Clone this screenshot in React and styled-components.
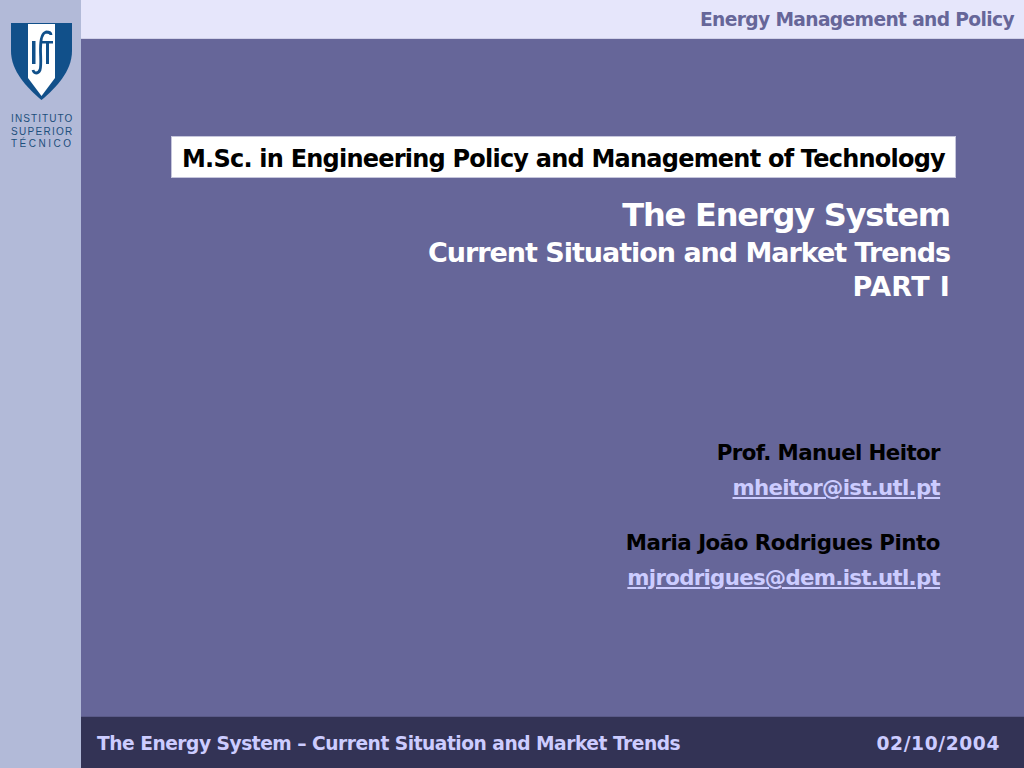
import styled, { createGlobalStyle } from "styled-components";

const Global = createGlobalStyle`
  html, body { margin: 0; padding: 0; }
  body { font-family: "DejaVu Sans", sans-serif; font-weight: bold; }
`;

const Slide = styled.div`
  width: 1024px;
  height: 768px;
  display: grid;
  grid-template-columns: 81px 1fr;
  overflow: hidden;
`;

const Sidebar = styled.aside`
  background: #b2bad8;
  display: flex;
  flex-direction: column;
  align-items: flex-start;
  padding-left: 11px;
`;

const Logo = styled.svg`
  display: block;
  width: 61px;
  height: 78px;
  margin-top: 23px;
`;

const LogoText = styled.div`
  margin-top: 12px;
  font-family: "Liberation Sans", sans-serif;
  font-weight: normal;
  font-size: 10px;
  line-height: 12.5px;
  color: #1d4f7c;
  white-space: nowrap;
`;

const LogoLine = styled.div`
  letter-spacing: ${(p) => p.$spacing}px;
`;

const Main = styled.div`
  display: flex;
  flex-direction: column;
  background: #666699;
`;

const Header = styled.header`
  height: 38px;
  flex: none;
  background: #e6e6fb;
  border-bottom: 1px solid #d0d0e8;
  color: #666699;
  font-size: 18.67px;
  letter-spacing: -0.64px;
  line-height: 39px;
  text-align: right;
  padding-right: 10px;
`;

const Content = styled.main`
  flex: 1;
  display: flex;
  flex-direction: column;
  align-items: flex-end;
  padding: 97px 68px 0 0;
`;

const Banner = styled.div`
  width: 785px;
  height: 42px;
  box-sizing: border-box;
  background: #fff;
  border: 1px solid #c6c6dc;
  color: #000;
  font-size: 24px;
  letter-spacing: -0.78px;
  line-height: 44px;
  text-align: center;
  white-space: nowrap;
`;

const Titles = styled.div`
  margin: 17px 6px 0 0;
  color: #fff;
  text-align: right;
`;

const Title = styled.h1`
  margin: 0;
  font-size: ${(p) => p.$size}px;
  line-height: ${(p) => p.$height}px;
  letter-spacing: ${(p) => p.$spacing}px;
`;

const Authors = styled.div`
  margin: 131px 16px 0 0;
  text-align: right;
  font-size: 21.33px;
`;

const Person = styled.div`
  margin-bottom: 20px;
`;

const Name = styled.div`
  color: #000;
  line-height: 35px;
  letter-spacing: ${(p) => p.$spacing}px;
`;

const Email = styled.a`
  display: block;
  color: #ccccff;
  line-height: 35px;
  letter-spacing: -0.72px;
  text-decoration: underline;
`;

const Footer = styled.footer`
  height: 52px;
  flex: none;
  box-sizing: border-box;
  background: #333355;
  border-top: 1px solid #5a5a88;
  color: #ccccff;
  font-size: 18.67px;
  display: flex;
  justify-content: space-between;
  align-items: center;
  padding: 1px 24px 0 16px;
`;

const FooterText = styled.span`
  letter-spacing: ${(p) => p.$spacing}px;
`;

const App = () => {
  return (
    <Slide>
      <Global />
      <Sidebar>
        <Logo viewBox="0 0 61 78">
          <path d="M0 0H61V28C61 48 45 65 30.5 77C16 65 0 48 0 28Z" fill="#11508a" />
          <path d="M17 1H44V55L30.5 73L17 55Z" fill="#fff" />
          <path d="M21 18H24.5V41H21Z M35 20H38V41H35Z M31 18H42V20.5H31Z" fill="#11508a" />
          <path
            d="M22 47C23 51 27 51 29 47C30.5 43 29.5 34 29.5 26C29.5 16 31 10 35 9C38 9 40 10 40 12"
            fill="none"
            stroke="#11508a"
            strokeWidth="2.8"
          />
        </Logo>
        <LogoText>
          <LogoLine $spacing={1.1}>INSTITUTO</LogoLine>
          <LogoLine $spacing={1.3}>SUPERIOR</LogoLine>
          <LogoLine $spacing={2.5}>TÉCNICO</LogoLine>
        </LogoText>
      </Sidebar>
      <Main>
        <Header>Energy Management and Policy</Header>
        <Content>
          <Banner>M.Sc. in Engineering Policy and Management of Technology</Banner>
          <Titles>
            <Title $size={32} $height={40} $spacing={-1.18}>The Energy System</Title>
            <Title $size={27} $height={35} $spacing={-1.03}>Current Situation and Market Trends</Title>
            <Title $size={27} $height={34} $spacing={0.3}>PART I</Title>
          </Titles>
          <Authors>
            <Person>
              <Name $spacing={-0.6}>Prof. Manuel Heitor</Name>
              <Email href="#">mheitor@ist.utl.pt</Email>
            </Person>
            <Person>
              <Name $spacing={-0.47}>Maria João Rodrigues Pinto</Name>
              <Email href="#">mjrodrigues@dem.ist.utl.pt</Email>
            </Person>
          </Authors>
        </Content>
        <Footer>
          <FooterText $spacing={-0.5}>The Energy System – Current Situation and Market Trends</FooterText>
          <FooterText $spacing={0.6}>02/10/2004</FooterText>
        </Footer>
      </Main>
    </Slide>
  );
};

export default App;
